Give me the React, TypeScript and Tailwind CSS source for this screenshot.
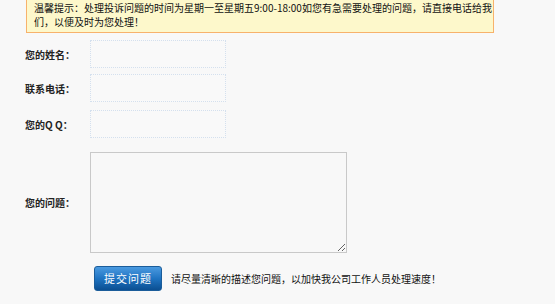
import React from 'react';

const font = "font-['SimSun','Noto_Sans_CJK_SC',sans-serif]";

export default function App() {
    return (
        <div className={`min-h-screen w-[555px] h-[304px] overflow-hidden bg-[#f8f8f8] text-[10px] text-[#222] ${font}`}>
            {/* notice */}
            <div className="ml-[26px] w-[468px] -mt-[6px] pt-[6px] pb-[3px] pl-[7px] pr-[4px] bg-[#fdf8cb] border border-[#f7b26c] leading-[14px] text-[#111] whitespace-nowrap">
                温馨提示：处理投诉问题的时间为星期一至星期五9:00-18:00如您有急需要处理的问题，请直接电话给我<br />
                们，以便及时为您处理！
            </div>

            <div className="ml-[25px] mt-[7px] flex flex-col">
                <div className="flex items-center h-[28px]">
                    <label className="w-[65px] font-bold">您的姓名：</label>
                    <input className="w-[136px] h-[28px] bg-[#f9f9f9] border border-dotted border-[#d4e0ee] outline-none" />
                </div>
                <div className="flex items-center h-[28px] mt-[6px]">
                    <label className="w-[65px] font-bold">联系电话：</label>
                    <input className="w-[136px] h-[28px] bg-[#f9f9f9] border border-dotted border-[#d4e0ee] outline-none" />
                </div>
                <div className="flex items-center h-[28px] mt-[8px]">
                    <label className="w-[65px] font-bold">您的Q Q：</label>
                    <input className="w-[136px] h-[28px] bg-[#f9f9f9] border border-dotted border-[#d4e0ee] outline-none" />
                </div>
                <div className="flex items-center mt-[14px]">
                    <label className="w-[65px] font-bold">您的问题：</label>
                    <textarea className="w-[257px] h-[101px] bg-[#f8f8f8] border border-[#c9c9c9] outline-none" />
                </div>
                <div className="flex items-center mt-[13px] pl-[69px]">
                    <button className="w-[68px] h-[25px] rounded-[3px] border border-[#1b5d9a] bg-gradient-to-b from-[#4a9ae0] via-[#1f74c2] to-[#0b4f92] text-white text-[11px] tracking-[1px]">
                        提交问题
                    </button>
                    <span className="ml-[9px] text-[#111]">请尽量清晰的描述您问题，以加快我公司工作人员处理速度！</span>
                </div>
            </div>
        </div>
    );
}
